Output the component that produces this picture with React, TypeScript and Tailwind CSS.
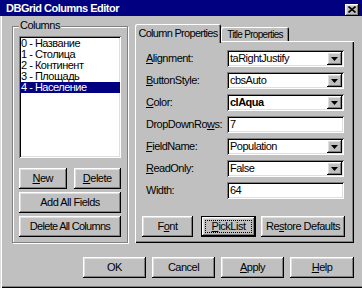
import React from "react";

const raised =
  "bg-[#c0c0c0] shadow-[inset_-1px_-1px_#000,inset_1px_1px_#fff,inset_-2px_-2px_#808080,inset_2px_2px_#dfdfdf]";
const sunken =
  "bg-white shadow-[inset_1px_1px_#808080,inset_-1px_-1px_#fff,inset_2px_2px_#000,inset_-2px_-2px_#dfdfdf]";

const columns = ["0 - Название", "1 - Столица", "2 - Континент", "3 - Площадь", "4 - Население"];

function Btn({ children, className = "", isDefault = false }: { children: React.ReactNode; className?: string; isDefault?: boolean }) {
  if (isDefault) {
    return (
      <div className={`h-[21px] border border-black ${className}`}>
        <div className={`${raised} h-full flex items-center justify-center p-[3px]`}>
          <div className="h-full w-full flex items-center justify-center border border-dotted border-black">{children}</div>
        </div>
      </div>
    );
  }
  return <div className={`${raised} h-[21px] flex items-center justify-center ${className}`}>{children}</div>;
}

function Arrow() {
  return (
    <svg width="7" height="4" viewBox="0 0 7 4">
      <polygon points="0,0 7,0 3.5,4" fill="#000" />
    </svg>
  );
}

function Combo({ value, bold = false }: { value: string; bold?: boolean }) {
  return (
    <div className={`${sunken} w-[117px] h-[17px] flex items-center pl-[3px] pr-[2px]`}>
      <span className={`flex-1 ${bold ? "font-bold" : ""}`}>{value}</span>
      <div className={`${raised} w-[15px] h-[13px] flex items-center justify-center`}>
        <Arrow />
      </div>
    </div>
  );
}

function Edit({ value }: { value: string }) {
  return <div className={`${sunken} w-[117px] h-[17px] flex items-center pl-[3px]`}>{value}</div>;
}

function Row({ label, children }: { label: React.ReactNode; children: React.ReactNode }) {
  return (
    <div className="flex items-center h-[17px]">
      <span className="w-[81px] whitespace-nowrap">{label}</span>
      {children}
    </div>
  );
}

export default function App() {
  return (
    <div className="w-[362px] h-[288px] bg-[#c0c0c0] flex flex-col text-[11px] leading-[13px] tracking-[-0.5px] text-black font-['Liberation_Sans',Arial,sans-serif] shadow-[inset_1px_0_#dfdfdf,inset_2px_0_#fff,inset_0_-1px_#000,inset_0_-2px_#808080] overflow-hidden">
      {/* Title bar */}
      <div className="h-[16px] bg-[#000080] flex items-center justify-between pl-[6px] pr-[3px] shrink-0">
        <span className="text-white font-bold text-[11px] tracking-[-0.5px]">DBGrid Columns Editor</span>
        <div className={`${raised} w-[14px] h-[12px] mt-[3px] flex items-center justify-center`}>
          <svg width="8" height="7" viewBox="0 0 8 7">
            <path d="M0.5 0.5 L7.5 6.5 M7.5 0.5 L0.5 6.5" stroke="#000" strokeWidth="1.6" />
          </svg>
        </div>
      </div>

      <div className="flex pl-[12px] pt-[8px]">
        {/* Columns group */}
        <div className="relative mt-[2px] w-[116px] h-[217px] border border-[#808080] shadow-[inset_1px_1px_#fff,1px_1px_#fff] flex flex-col px-[6px] pt-[9px]">
          <span className="absolute left-[6px] top-[-8px] px-[1px] bg-[#c0c0c0]">Columns</span>
          <div className={`${sunken} h-[122px] px-[1px] pt-[2px] flex flex-col`}>
            {columns.map((c, i) => (
              <div
                key={c}
                className={`h-[11px] leading-[11px] pl-[1px] ${i === 4 ? "bg-[#000080] text-white" : ""}`}
              >
                {c}
              </div>
            ))}
          </div>
          <div className="grid grid-cols-2 gap-x-[7px] mt-[10px]">
            <Btn>
              <span>
                <u>N</u>ew
              </span>
            </Btn>
            <Btn>
              <span>
                <u>D</u>elete
              </span>
            </Btn>
          </div>
          <Btn className="mt-[3px]">Add All Fields</Btn>
          <Btn className="mt-[3px] tracking-[-0.7px]">Delete All Columns</Btn>
        </div>

        {/* Tab control */}
        <div className="ml-[7px] w-[219px] flex flex-col">
          <div className="flex items-end h-[17px] relative z-10">
            <div className="h-[19px] mb-[-2px] w-[86px] bg-[#c0c0c0] rounded-t-[2px] shadow-[inset_1px_1px_#fff,inset_-1px_0_#000,inset_-2px_0_#808080] flex items-start justify-center pt-[3px] tracking-[-0.7px]">
              Column Properties
            </div>
            <div className="h-[14px] w-[68px] bg-[#c0c0c0] rounded-t-[2px] shadow-[inset_1px_1px_#fff,inset_-1px_0_#000,inset_-2px_0_#808080] flex items-center justify-center tracking-[-0.7px] text-[10px]">
              Title Properties
            </div>
          </div>
          <div className="h-[202px] shadow-[inset_1px_1px_#fff,inset_-1px_-1px_#000,inset_-2px_-2px_#808080] flex flex-col px-[7px] pt-[9px]">
            <div className="flex flex-col gap-[5px] pl-[4px]">
              <Row label={<><u>A</u>lignment:</>}>
                <Combo value="taRightJustify" />
              </Row>
              <Row label={<><u>B</u>uttonStyle:</>}>
                <Combo value="cbsAuto" />
              </Row>
              <Row label={<><u>C</u>olor:</>}>
                <Combo value="clAqua" bold />
              </Row>
              <Row label={<>DropDownRo<u>w</u>s:</>}>
                <Edit value="7" />
              </Row>
              <Row label={<><u>F</u>ieldName:</>}>
                <Combo value="Population" />
              </Row>
              <Row label={<><u>R</u>eadOnly:</>}>
                <Combo value="False" />
              </Row>
              <Row label={<>Width:</>}>
                <Edit value="64" />
              </Row>
            </div>
            <div className="flex mt-[17px]">
              <Btn className="w-[51px]">
                <span>
                  F<u>o</u>nt
                </span>
              </Btn>
              <Btn isDefault className="w-[55px] ml-[8px]">
                <span>
                  <u>P</u>ickList
                </span>
              </Btn>
              <Btn className="w-[84px] ml-[5px]">
                <span>
                  Re<u>s</u>tore Defaults
                </span>
              </Btn>
            </div>
          </div>
        </div>
      </div>

      {/* Dialog buttons */}
      <div className="flex justify-end gap-[6px] pr-[8px] mt-[14px]">
        <Btn className="w-[63px]">OK</Btn>
        <Btn className="w-[63px]">Cancel</Btn>
        <Btn className="w-[63px]">
          <span>
            <u>A</u>pply
          </span>
        </Btn>
        <Btn className="w-[64px]">
          <span>
            <u>H</u>elp
          </span>
        </Btn>
      </div>
    </div>
  );
}
